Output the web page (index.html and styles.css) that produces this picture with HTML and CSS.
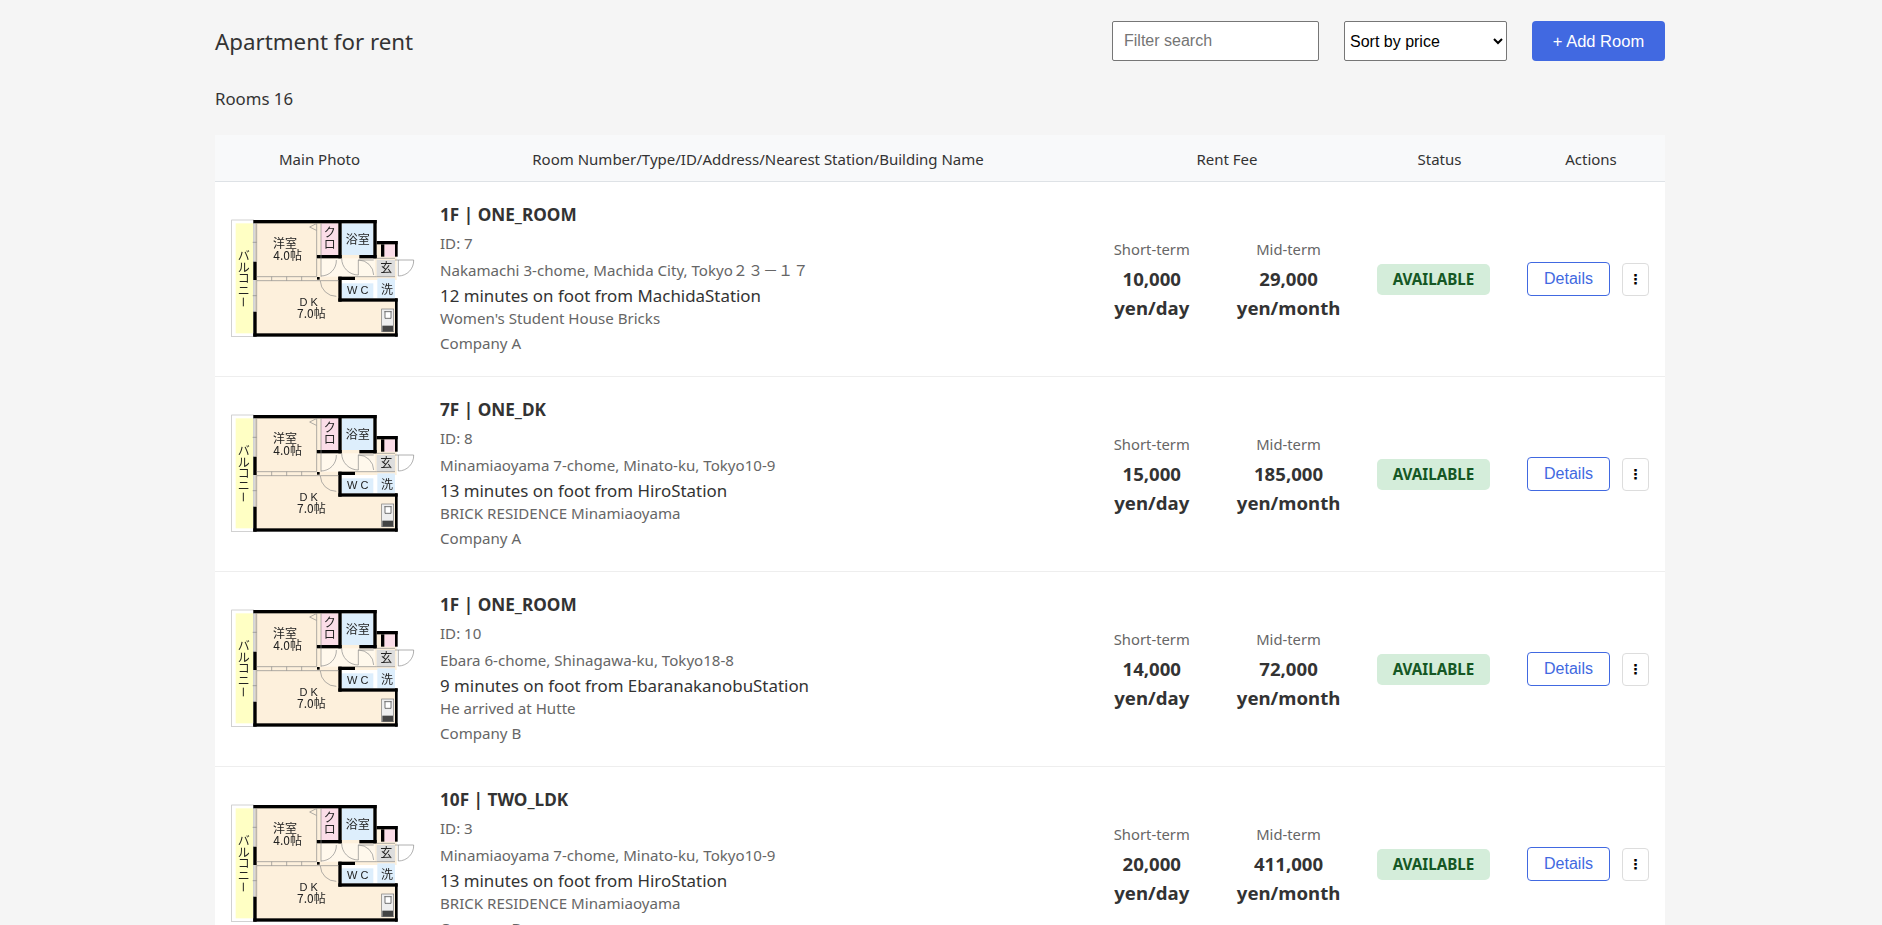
FILE: index.html
```html
<!DOCTYPE html>
<html lang="en">
<head>
    <meta charset="UTF-8">
    <meta name="viewport" content="width=device-width, initial-scale=1.0">
    <title>Apartment for rent</title>
    <link rel="stylesheet" href="styles.css">
</head>
<body>
    <!-- Floor plan, shared by every row -->
    <svg class="plan-defs" width="0" height="0">
        <symbol id="plan" viewBox="0 0 630 435">
            <rect x="50" y="45" width="66" height="350" fill="#fff" stroke="#bbb" stroke-width="2"/>
            <rect x="62" y="55" width="52" height="330" fill="#ffffc4"/>
            <rect x="120" y="50" width="425" height="340" fill="#fdf0dc"/>
            <rect x="485" y="45" width="70" height="63" fill="#fff"/>
            <rect x="380" y="225" width="175" height="60" fill="#fff"/>
            <rect x="318" y="55" width="52" height="95" fill="#fbdde8"/>
            <rect x="380" y="55" width="95" height="95" fill="#ddeefc"/>
            <rect x="508" y="118" width="32" height="37" fill="#fbdde8"/>
            <rect x="485" y="165" width="55" height="50" fill="#ddd"/>
            <rect x="380" y="235" width="95" height="45" fill="#ddeefc"/>
            <rect x="487" y="220" width="53" height="60" fill="#ddeefc"/>
            <rect x="318" y="160" width="162" height="55" fill="#fff8ec"/>
            <g fill="#000">
                <rect x="115" y="45" width="370" height="10"/>
                <rect x="115" y="170" width="10" height="55"/>
                <rect x="115" y="320" width="10" height="75"/>
                <rect x="115" y="385" width="433" height="10"/>
                <rect x="540" y="280" width="8" height="115"/>
                <rect x="370" y="280" width="178" height="10"/>
                <rect x="370" y="215" width="10" height="75"/>
                <rect x="370" y="215" width="50" height="10"/>
                <rect x="305" y="150" width="75" height="10"/>
                <rect x="370" y="45" width="10" height="115"/>
                <rect x="475" y="45" width="10" height="115"/>
                <rect x="433" y="150" width="52" height="10"/>
                <rect x="485" y="108" width="63" height="10"/>
                <rect x="540" y="108" width="8" height="47"/>
                <rect x="498" y="118" width="10" height="37"/>
                <rect x="306" y="216" width="8" height="8"/>
            </g>
            <g fill="none" stroke="#888" stroke-width="2">
                <path d="M120 55V170M125 55V170M120 225V320M125 225V320M113 112H125M113 272H125"/>
                <path d="M125 215H305M125 227H370M170 215V227M215 215V227M260 215V227"/>
                <path d="M305 55V150M318 55V215M305 160V215"/>
                <path d="M318 213A46 46 0 0 0 364 165M380 160A50 50 0 0 0 430 210M430 210V165H476"/>
                <path d="M316 228A48 48 0 0 0 364 274M430 165A46 46 0 0 1 476 210"/>
                <path d="M485 160H540M485 215H540M540 165H596A46 46 0 0 1 550 213V165M420 215H485"/>
                <path d="M304 56L284 66L304 76"/>
            </g>
            <rect x="500" y="312" width="36" height="68" fill="#eee" stroke="#777" stroke-width="2"/>
            <rect x="502" y="362" width="32" height="18" fill="#444"/>
            <path d="M508 320H530M510 320V340H528V320" fill="#fff" stroke="#333" stroke-width="2"/>
            <g class="plan-label">
                <text x="210" y="128">洋室</text>
                <text x="218" y="164">4.0帖</text>
                <text x="344" y="96">ク</text>
                <text x="344" y="131">ロ</text>
                <text x="428" y="118">浴室</text>
                <text x="514" y="201">玄</text>
                <text x="428" y="267" class="plan-wc">W C</text>
                <text x="516" y="266">洗</text>
                <text x="281" y="304" class="plan-wc">D K</text>
                <text x="289" y="340">7.0帖</text>
                <text x="86" y="165">バ</text>
                <text x="86" y="200">ル</text>
                <text x="86" y="235">コ</text>
                <text x="86" y="270">ニ</text>
                <path d="M85 278V304" fill="none" stroke="#222" stroke-width="3"/>
            </g>
        </symbol>
    </svg>

    <main class="page">
        <header class="top-bar">
            <h1>Apartment for rent</h1>
            <div class="controls">
                <input type="text" class="search" placeholder="Filter search">
                <select class="sort">
                    <option>Sort by price</option>
                </select>
                <button class="add-btn">+ Add Room</button>
            </div>
        </header>
        <p class="count">Rooms 16</p>

        <table class="rooms">
            <thead>
                <tr>
                    <th class="col-photo">Main Photo</th>
                    <th class="col-info">Room Number/Type/ID/Address/Nearest Station/Building Name</th>
                    <th class="col-rent">Rent Fee</th>
                    <th class="col-status">Status</th>
                    <th class="col-actions">Actions</th>
                </tr>
            </thead>
            <tbody>
                <tr>
                    <td class="photo"><svg class="plan"><use href="#plan"/></svg></td>
                    <td class="info">
                        <div class="room-title">1F | ONE_ROOM</div>
                        <div class="meta room-id">ID: 7</div>
                        <div class="meta address">Nakamachi 3-chome, Machida City, Tokyo２３－１７</div>
                        <div class="station">12 minutes on foot from MachidaStation</div>
                        <div class="meta building">Women's Student House Bricks</div>
                        <div class="meta">Company A</div>
                    </td>
                    <td>
                        <div class="rent">
                            <div class="fee"><span class="term">Short-term</span><b>10,000<br>yen/day</b></div>
                            <div class="fee"><span class="term">Mid-term</span><b>29,000<br>yen/month</b></div>
                        </div>
                    </td>
                    <td class="status"><span class="badge">AVAILABLE</span></td>
                    <td>
                        <div class="actions">
                            <button class="details-btn">Details</button>
                            <button class="more-btn">⋮</button>
                        </div>
                    </td>
                </tr>
                <tr>
                    <td class="photo"><svg class="plan"><use href="#plan"/></svg></td>
                    <td class="info">
                        <div class="room-title">7F | ONE_DK</div>
                        <div class="meta room-id">ID: 8</div>
                        <div class="meta address">Minamiaoyama 7-chome, Minato-ku, Tokyo10-9</div>
                        <div class="station">13 minutes on foot from HiroStation</div>
                        <div class="meta building">BRICK RESIDENCE Minamiaoyama</div>
                        <div class="meta">Company A</div>
                    </td>
                    <td>
                        <div class="rent">
                            <div class="fee"><span class="term">Short-term</span><b>15,000<br>yen/day</b></div>
                            <div class="fee"><span class="term">Mid-term</span><b>185,000<br>yen/month</b></div>
                        </div>
                    </td>
                    <td class="status"><span class="badge">AVAILABLE</span></td>
                    <td>
                        <div class="actions">
                            <button class="details-btn">Details</button>
                            <button class="more-btn">⋮</button>
                        </div>
                    </td>
                </tr>
                <tr>
                    <td class="photo"><svg class="plan"><use href="#plan"/></svg></td>
                    <td class="info">
                        <div class="room-title">1F | ONE_ROOM</div>
                        <div class="meta room-id">ID: 10</div>
                        <div class="meta address">Ebara 6-chome, Shinagawa-ku, Tokyo18-8</div>
                        <div class="station">9 minutes on foot from EbaranakanobuStation</div>
                        <div class="meta building">He arrived at Hutte</div>
                        <div class="meta">Company B</div>
                    </td>
                    <td>
                        <div class="rent">
                            <div class="fee"><span class="term">Short-term</span><b>14,000<br>yen/day</b></div>
                            <div class="fee"><span class="term">Mid-term</span><b>72,000<br>yen/month</b></div>
                        </div>
                    </td>
                    <td class="status"><span class="badge">AVAILABLE</span></td>
                    <td>
                        <div class="actions">
                            <button class="details-btn">Details</button>
                            <button class="more-btn">⋮</button>
                        </div>
                    </td>
                </tr>
                <tr>
                    <td class="photo"><svg class="plan"><use href="#plan"/></svg></td>
                    <td class="info">
                        <div class="room-title">10F | TWO_LDK</div>
                        <div class="meta room-id">ID: 3</div>
                        <div class="meta address">Minamiaoyama 7-chome, Minato-ku, Tokyo10-9</div>
                        <div class="station">13 minutes on foot from HiroStation</div>
                        <div class="meta building">BRICK RESIDENCE Minamiaoyama</div>
                        <div class="meta">Company B</div>
                    </td>
                    <td>
                        <div class="rent">
                            <div class="fee"><span class="term">Short-term</span><b>20,000<br>yen/day</b></div>
                            <div class="fee"><span class="term">Mid-term</span><b>411,000<br>yen/month</b></div>
                        </div>
                    </td>
                    <td class="status"><span class="badge">AVAILABLE</span></td>
                    <td>
                        <div class="actions">
                            <button class="details-btn">Details</button>
                            <button class="more-btn">⋮</button>
                        </div>
                    </td>
                </tr>
            </tbody>
        </table>
    </main>
</body>
</html>
```

FILE: styles.css
```css
html {
    overflow: hidden;
}
body {
    margin: 0;
    background: #f5f5f5;
    color: #333;
    font-family: "Noto Sans", "Noto Sans CJK JP", sans-serif;
    font-size: 16px;
}
.plan-defs {
    position: absolute;
}
.page {
    width: 1450px;
    margin: 0 auto 0 215px;
}
.top-bar {
    display: flex;
    justify-content: space-between;
    align-items: center;
    padding-top: 21px;
    height: 40px;
}
h1 {
    margin: 0;
    padding-top: 1px;
    font-size: 22.3px;
    font-weight: 400;
}
.controls {
    display: flex;
    gap: 25px;
    height: 40px;
}
.search {
    box-sizing: border-box;
    width: 207px;
    padding: 0 11px;
    border: 1px solid #767676;
    border-radius: 2px;
    font-family: "Liberation Sans", sans-serif;
    font-size: 16px;
    background: #fff;
}
.search::placeholder {
    color: #757575;
}
.sort {
    box-sizing: border-box;
    width: 163px;
    padding: 0 1px;
    border: 1px solid #767676;
    border-radius: 2px;
    background-color: #fff;
    color: #000;
    font-family: "Liberation Sans", sans-serif;
    font-size: 16px;
}
.add-btn {
    width: 133px;
    border: none;
    border-radius: 4px;
    background: #4169e1;
    color: #fff;
    font-family: "Liberation Sans", sans-serif;
    font-size: 16.5px;
}
.count {
    margin: 27px 0 0;
    height: 22px;
    line-height: 22px;
    font-size: 16.8px;
}

/* table */
.rooms {
    width: 100%;
    margin-top: 25px;
    table-layout: fixed;
    border-collapse: collapse;
    background: #fff;
}
.rooms th {
    height: 44px;
    padding: 2px 0 0;
    background: #f8f9fa;
    border-bottom: 1px solid #dee2e6;
    font-size: 15px;
    font-weight: 400;
}
.col-photo {
    width: 209px;
}
.col-info {
    width: 668px;
}
.col-rent {
    width: 270px;
}
.col-status {
    width: 155px;
}
.rooms td {
    height: 194px;
    padding: 0;
    border-bottom: 1px solid #eee;
    vertical-align: middle;
}
.rooms td.photo {
    height: 190px;
    padding-bottom: 4px;
}
.plan {
    display: block;
    width: 210px;
    height: 145px;
    filter: blur(0.35px);
}
.plan-label text {
    font-family: "Noto Sans CJK JP", sans-serif;
    font-size: 36px;
    text-anchor: middle;
    fill: #222;
}
.plan-label .plan-wc {
    font-family: "Liberation Sans", sans-serif;
    font-size: 33px;
}
.rooms td.info {
    height: 191px;
    padding: 0 0 3px 16px;
}
.room-title {
    font-size: 17.2px;
    font-weight: 700;
    line-height: 24px;
    margin-bottom: 6px;
}
.meta {
    color: #666;
    font-size: 15.1px;
    line-height: 20px;
}
.room-id {
    margin-bottom: 7px;
}
.address {
    margin-bottom: 5px;
}
.station {
    font-size: 16.9px;
    line-height: 22px;
    margin-bottom: 1px;
}
.building {
    margin-bottom: 5px;
}
.rent {
    display: flex;
    justify-content: center;
    gap: 47px;
    padding-top: 3px;
    text-align: center;
}
.fee {
    display: flex;
    flex-direction: column;
    gap: 5px;
}
.term {
    color: #666;
    font-size: 14.8px;
    line-height: 20px;
}
.fee b {
    font-size: 18.6px;
    line-height: 29px;
}
.rooms td.status {
    padding-left: 15px;
}
.badge {
    display: inline-block;
    width: 113px;
    height: 31px;
    line-height: 31px;
    border-radius: 5px;
    background: #d4edda;
    color: #155724;
    font-size: 15.2px;
    font-weight: 700;
    text-align: center;
}
.actions {
    display: flex;
    align-items: center;
    gap: 12px;
    padding-left: 10px;
}
.details-btn {
    width: 83px;
    height: 34px;
    border: 1px solid #4169e1;
    border-radius: 4px;
    background: #fff;
    color: #4169e1;
    font-family: "Liberation Sans", sans-serif;
    font-size: 16px;
}
.more-btn {
    width: 27px;
    height: 33px;
    padding: 0;
    border: 1px solid #ddd;
    border-radius: 4px;
    background: #fff;
    color: #000;
    font-family: "DejaVu Sans", sans-serif;
    font-size: 14px;
    font-weight: 700;
}
```
